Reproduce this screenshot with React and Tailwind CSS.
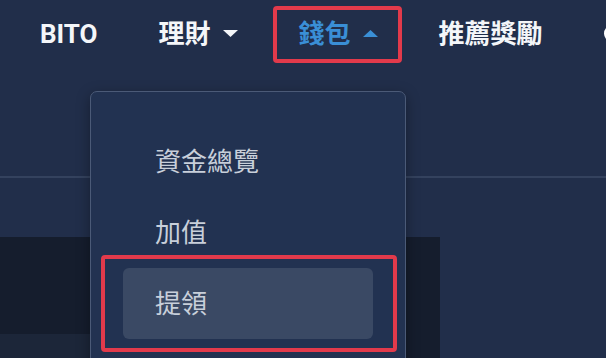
import { useState } from "react";

const font = { fontFamily: 'Roboto, "Noto Sans CJK TC", sans-serif' };

// nav items
const navItems = [
  { label: "BITO" },
  { label: "理財", arrow: "down" },
  { label: "錢包", arrow: "up", active: true },
  { label: "推薦獎勵" },
];

// wallet menu
const walletMenu = ["資金總覽", "加值", "提領"];

function Caret({ dir, color }) {
  return (
    <svg width="15" height="7" viewBox="0 0 15 7" className="shrink-0">
      {dir === "down" ? (
        <polygon points="0,0 15,0 7.5,7" fill={color} />
      ) : (
        <polygon points="0,7 15,7 7.5,0" fill={color} />
      )}
    </svg>
  );
}

export default function App() {
  const [hovered] = useState("提領");

  return (
    <div
      className="relative w-[606px] h-[358px] overflow-hidden bg-[#212e4a]"
      style={font}
    >
      {/* Top nav */}
      <nav className="h-[67px] flex items-center pl-[40px] gap-[61px]">
        {navItems.map((item) => (
          <div
            key={item.label}
            className={`relative h-[34px] flex items-center gap-[12px] text-[26px] font-bold leading-none whitespace-nowrap ${
              item.active ? "text-[#3a8fd6]" : "text-[#f4f6f9]"
            }`}
          >
            <span>{item.label}</span>
            {item.arrow && (
              <Caret dir={item.arrow} color={item.active ? "#3a8fd6" : "#f4f6f9"} />
            )}
            {item.active && (
              <span className="absolute -left-[26px] -right-[24px] -top-[11px] -bottom-[12px] border-4 border-[#e23a4b] rounded-[4px]" />
            )}
          </div>
        ))}
        <div className="ml-auto mr-[-20px] w-[26px] h-[17px] rounded-full bg-white" />
      </nav>

      {/* page header band */}
      <div className="h-[111px] border-b-2 border-[#34425e]" />
      <div className="h-[59px]" />

      {/* content panel under the menu */}
      <div className="w-[440px] flex flex-col">
        <div className="h-[97px] bg-[#151d2d]" />
        <div className="h-[40px] flex">
          <div className="w-[406px] bg-[#1c2639]" />
          <div className="flex-1 bg-[#151d2d]" />
        </div>
      </div>

      {/* Wallet dropdown */}
      <div className="absolute left-[90px] top-[91px] w-[316px] h-[300px] rounded-[7px] border border-[#4b5a77] bg-[#223251] shadow-[0_4px_14px_rgba(0,0,0,0.35)] pt-[34px] px-[32px]">
        {walletMenu.map((label) => (
          <div
            key={label}
            className={`relative h-[71px] flex items-center pl-[32px] rounded-[6px] text-[26px] font-normal text-[#c8cfda] leading-none ${
              hovered === label ? "bg-[#3a4964]" : ""
            }`}
          >
            {label}
            {hovered === label && (
              <span className="absolute -left-[22px] -right-[24px] -top-[13px] -bottom-[13px] border-4 border-[#e23a4b] rounded-[4px]" />
            )}
          </div>
        ))}
      </div>
    </div>
  );
}
